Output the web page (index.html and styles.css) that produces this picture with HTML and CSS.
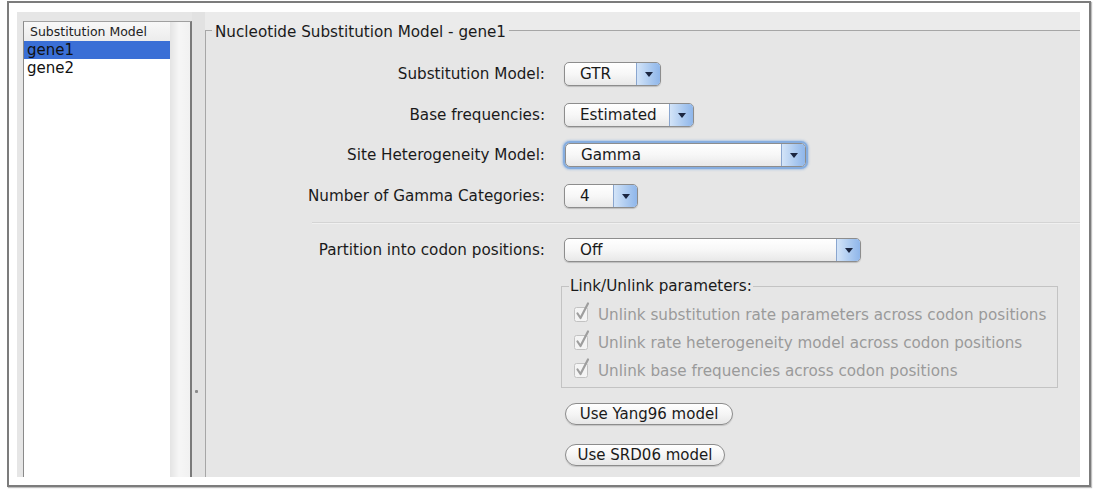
FILE: index.html
```html
<!DOCTYPE html>
<html lang="en">
<head>
<meta charset="utf-8">
<title>Substitution Model</title>
<link rel="stylesheet" href="styles.css">
</head>
<body>
<div class="frame">
  <div class="content">
    <div class="left-pane">
      <div class="list">
        <div class="list-main">
          <div class="list-header">Substitution Model</div>
          <div class="list-item selected">gene1</div>
          <div class="list-item">gene2</div>
        </div>
        <div class="list-track"></div>
      </div>
    </div>
    <div class="splitter"><span class="grip"></span></div>
    <div class="right-pane">
      <fieldset class="model-box">
        <legend>Nucleotide Substitution Model - gene1</legend>
        <div class="form">
          <div class="row">
            <span class="label">Substitution Model:</span>
            <div class="select w-gtr"><span class="value">GTR</span><span class="arrow"><span class="tri"></span></span></div>
          </div>
          <div class="row">
            <span class="label">Base frequencies:</span>
            <div class="select w-est"><span class="value">Estimated</span><span class="arrow"><span class="tri"></span></span></div>
          </div>
          <div class="row">
            <span class="label">Site Heterogeneity Model:</span>
            <div class="select w-gamma focused"><span class="value">Gamma</span><span class="arrow"><span class="tri"></span></span></div>
          </div>
          <div class="row">
            <span class="label">Number of Gamma Categories:</span>
            <div class="select w-four"><span class="value">4</span><span class="arrow"><span class="tri"></span></span></div>
          </div>
          <div class="separator"></div>
          <div class="row row-partition">
            <span class="label">Partition into codon positions:</span>
            <div class="select w-off"><span class="value">Off</span><span class="arrow"><span class="tri"></span></span></div>
          </div>
          <div class="row row-link">
            <span class="label"></span>
            <fieldset class="link-box">
              <legend>Link/Unlink parameters:</legend>
              <div class="check-row">
                <svg class="check" width="20" height="22" viewBox="0 0 20 22"><rect x="1.5" y="6.5" width="13" height="14" rx="2" fill="#f4f4f4" stroke="#c2c2c2"/><path d="M4.5 12.5 L7.5 17 L15 2.5" fill="none" stroke="#9e9e9e" stroke-width="2.2" stroke-linecap="round" stroke-linejoin="round"/></svg>
                <span>Unlink substitution rate parameters across codon positions</span>
              </div>
              <div class="check-row">
                <svg class="check" width="20" height="22" viewBox="0 0 20 22"><rect x="1.5" y="6.5" width="13" height="14" rx="2" fill="#f4f4f4" stroke="#c2c2c2"/><path d="M4.5 12.5 L7.5 17 L15 2.5" fill="none" stroke="#9e9e9e" stroke-width="2.2" stroke-linecap="round" stroke-linejoin="round"/></svg>
                <span>Unlink rate heterogeneity model across codon positions</span>
              </div>
              <div class="check-row">
                <svg class="check" width="20" height="22" viewBox="0 0 20 22"><rect x="1.5" y="6.5" width="13" height="14" rx="2" fill="#f4f4f4" stroke="#c2c2c2"/><path d="M4.5 12.5 L7.5 17 L15 2.5" fill="none" stroke="#9e9e9e" stroke-width="2.2" stroke-linecap="round" stroke-linejoin="round"/></svg>
                <span>Unlink base frequencies across codon positions</span>
              </div>
            </fieldset>
          </div>
          <div class="row row-btn1">
            <span class="label"></span>
            <button class="pill w-yang">Use Yang96 model</button>
          </div>
          <div class="row row-btn2">
            <span class="label"></span>
            <button class="pill w-srd">Use SRD06 model</button>
          </div>
        </div>
      </fieldset>
    </div>
  </div>
</div>
</body>
</html>
```

FILE: styles.css
```css
* { box-sizing: border-box; }
html, body { margin: 0; padding: 0; background: #ffffff; }
body {
  font-family: "DejaVu Sans", "Liberation Sans", sans-serif;
  font-size: 15.2px;
  color: #1a1a1a;
  width: 1095px;
  height: 489px;
  overflow: hidden;
}
.frame {
  margin: 1px 0 0 7px;
  width: 1084px;
  height: 486px;
  border: 2px solid #7c7c7c;
  padding: 9px 9px 8px 8px;
  box-shadow: 1px 1px 1px rgba(0,0,0,0.25);
  background: #ffffff;
}
.content {
  display: flex;
  height: 100%;
  background: #e6e6e6;
  overflow: hidden;
}
/* left list */
.left-pane {
  width: 175px;
  flex: none;
  padding: 9px 0 0 6px;
}
.list {
  display: flex;
  height: 100%;
  border-top: 1px solid #a0a0a0;
  border-left: 1px solid #8a8a8a;
  border-right: 2px solid #7a7a7a;
}
.list-main {
  width: 146px;
  background: #ffffff;
}
.list-header {
  height: 19px;
  line-height: 19px;
  font-size: 12.5px;
  padding-left: 6px;
  color: #222;
  background: linear-gradient(#f8f8f8, #ececec);
}
.list-item {
  height: 18px;
  line-height: 18px;
  padding-left: 3px;
  font-size: 15px;
  color: #111;
}
.list-item.selected { background: #3a6fd6; }
.list-track {
  width: 20px;
  background: linear-gradient(to right, #e4e4e4, #f6f6f6 45%, #f1f1f1);
}
.splitter {
  width: 13px;
  flex: none;
  background: #e2e2e2;
  padding: 378px 0 0 3px;
}
.grip {
  display: block;
  width: 3px;
  height: 3px;
  border-radius: 1px;
  background: #8a8a8a;
}
/* right */
.right-pane {
  flex: 1;
  padding-top: 7.5px;
  display: flex;
  background: linear-gradient(#ebebeb 0, #ebebeb 18px, #e6e6e6 18px);
}
.model-box {
  flex: 1;
  margin: 0;
  padding: 0;
  min-width: 0;
  border: none;
  border-top: 1px solid #a6a6a6;
  border-left: 1px solid #a6a6a6;
  background: #e6e6e6;
}
.model-box > legend {
  margin-left: 6px;
  padding: 4px 3px 0 3px;
  line-height: 17px;
  color: #1a1a1a;
}
.form {
  padding-top: 21.5px;
}
.row {
  display: grid;
  grid-template-columns: 339px auto;
  column-gap: 19px;
  align-items: center;
  justify-items: start;
  height: 24px;
}
.row + .row { margin-top: 16.5px; }
.label {
  justify-self: end;
  white-space: nowrap;
  color: #1a1a1a;
}
.select {
  display: flex;
  align-items: stretch;
  height: 24px;
  border: 1px solid #8d8d8d;
  border-radius: 5px;
  background: linear-gradient(#ffffff, #f7f7f7 50%, #e8e8e8);
  box-shadow: 0 1px 1px rgba(0,0,0,0.18);
  overflow: hidden;
}
.select .value {
  padding-left: 15px;
  line-height: 22px;
  color: #1a1a1a;
}
.select .arrow {
  margin-left: auto;
  width: 24px;
  border-left: 1px solid #8aa6cf;
  background: linear-gradient(to right, #d3e4f8, #a9c8ef 60%, #8fb6ea);
  display: flex;
  align-items: center;
  justify-content: center;
}
.tri {
  width: 0;
  height: 0;
  border-left: 4px solid transparent;
  border-right: 4px solid transparent;
  border-top: 5px solid #1b2640;
  margin-top: 1px;
}
.w-gtr { width: 97px; }
.w-est { width: 130px; }
.w-gamma { width: 241px; margin-left: 1px; }
.w-four { width: 74px; }
.w-off { width: 297px; }
.focused {
  box-shadow: 0 0 0 2px #86addf, 0 0 2px 3px rgba(110,160,225,0.45);
}
.separator {
  margin: 14px 0 0 106px;
  height: 2px;
  border-top: 1px solid #d4d4d4;
  border-bottom: 1px solid #f0f0f0;
}
.row.row-partition { margin-top: 14px; }
.row.row-link {
  height: auto;
  margin-top: 16px;
}
.link-box {
  width: 497px;
  margin: 0 0 0 -3px;
  padding: 6px 0 2px 11px;
  border: 1px solid #c3c3c3;
  min-width: 0;
}
.link-box > legend {
  margin-left: -4px;
  padding: 0 1px;
  line-height: 17px;
  color: #1a1a1a;
}
.check-row {
  display: flex;
  align-items: center;
  height: 28px;
  color: #9a9a9a;
  white-space: nowrap;
}
.check {
  flex: none;
  margin: -6px 5px 0 0;
}
.pill {
  font-family: inherit;
  font-size: 15px;
  color: #1a1a1a;
  height: 22px;
  padding: 0;
  margin-left: 1px;
  border: 1px solid #8c8c8c;
  border-radius: 11px;
  background: linear-gradient(#ffffff, #f5f5f5 50%, #e6e6e6);
  box-shadow: 0 1px 1px rgba(0,0,0,0.15);
  text-align: center;
  line-height: 20px;
}
.w-yang { width: 168px; }
.w-srd { width: 160px; }
.row.row-btn1 { margin-top: 15px; height: 22px; }
.row.row-btn2 { margin-top: 19px; height: 22px; }
```
